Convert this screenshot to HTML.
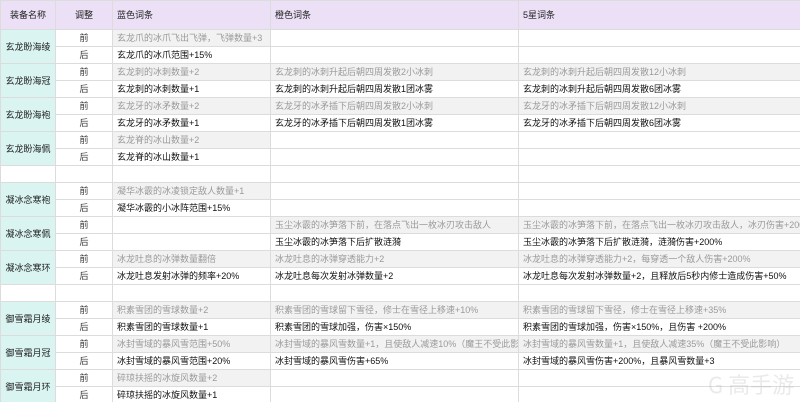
<!DOCTYPE html>
<html><head><meta charset="utf-8"><style>
html,body{margin:0;padding:0;background:#fff;width:800px;height:402px;overflow:hidden}
table{border-collapse:collapse;table-layout:fixed;width:801px;font-family:"Liberation Sans","Noto Sans CJK SC",sans-serif;font-size:9px;color:#111}
td,th{border:1px solid #dcdcdc;height:16px;padding:0 0 0 4px;white-space:nowrap;overflow:hidden;line-height:16px}
th{height:28px;background:#ebe0f6;font-weight:normal;text-align:left;color:#222}
th.c{text-align:center;padding:0}
td.n{background:#d9f4f1;text-align:center;padding:0;color:#222}
td.a{text-align:center;padding:0;color:#333}
tr.p td.t{background:#f2f2f2;color:#9a9a9a}
tr.p td.e{background:#fff}
.wm{position:absolute;left:708px;top:368px;font:22px "Noto Sans CJK SC",sans-serif;color:rgba(170,170,170,.25)}
</style></head><body>
<table>
<colgroup><col style="width:55px"><col style="width:57px"><col style="width:158px"><col style="width:248px"><col style="width:283px"></colgroup>
<tr><th class="c">装备名称</th><th class="c">调整</th><th>蓝色词条</th><th>橙色词条</th><th>5星词条</th></tr>
<tr class="p"><td class="n" rowspan="2">玄龙盼海绫</td><td class="a">前</td><td class="t">玄龙爪的冰爪飞出飞弹，飞弹数量+3</td><td class="e"></td><td class="e"></td></tr>
<tr><td class="a">后</td><td>玄龙爪的冰爪范围+15%</td><td></td><td></td></tr>
<tr class="p"><td class="n" rowspan="2">玄龙盼海冠</td><td class="a">前</td><td class="t">玄龙刺的冰刺数量+2</td><td class="t">玄龙刺的冰刺升起后朝四周发散2小冰刺</td><td class="t">玄龙刺的冰刺升起后朝四周发散12小冰刺</td></tr>
<tr><td class="a">后</td><td>玄龙刺的冰刺数量+1</td><td>玄龙刺的冰刺升起后朝四周发散1团冰雾</td><td>玄龙刺的冰刺升起后朝四周发散6团冰雾</td></tr>
<tr class="p"><td class="n" rowspan="2">玄龙盼海袍</td><td class="a">前</td><td class="t">玄龙牙的冰矛数量+2</td><td class="t">玄龙牙的冰矛插下后朝四周发散2小冰刺</td><td class="t">玄龙牙的冰矛插下后朝四周发散12小冰刺</td></tr>
<tr><td class="a">后</td><td>玄龙牙的冰矛数量+1</td><td>玄龙牙的冰矛插下后朝四周发散1团冰雾</td><td>玄龙牙的冰矛插下后朝四周发散6团冰雾</td></tr>
<tr class="p"><td class="n" rowspan="2">玄龙盼海佩</td><td class="a">前</td><td class="t">玄龙脊的冰山数量+2</td><td class="e"></td><td class="e"></td></tr>
<tr><td class="a">后</td><td>玄龙脊的冰山数量+1</td><td></td><td></td></tr>
<tr><td></td><td></td><td></td><td></td><td></td></tr>
<tr class="p"><td class="n" rowspan="2">凝冰念寒袍</td><td class="a">前</td><td class="t">凝华冰霰的冰凌锁定敌人数量+1</td><td class="e"></td><td class="e"></td></tr>
<tr><td class="a">后</td><td>凝华冰霰的小冰阵范围+15%</td><td></td><td></td></tr>
<tr class="p"><td class="n" rowspan="2">凝冰念寒佩</td><td class="a">前</td><td class="e"></td><td class="t">玉尘冰霰的冰笋落下前，在落点飞出一枚冰刃攻击敌人</td><td class="t">玉尘冰霰的冰笋落下前，在落点飞出一枚冰刃攻击敌人，冰刃伤害+200%</td></tr>
<tr><td class="a">后</td><td></td><td>玉尘冰霰的冰笋落下后扩散涟漪</td><td>玉尘冰霰的冰笋落下后扩散涟漪，涟漪伤害+200%</td></tr>
<tr class="p"><td class="n" rowspan="2">凝冰念寒环</td><td class="a">前</td><td class="t">冰龙吐息的冰弹数量翻倍</td><td class="t">冰龙吐息的冰弹穿透能力+2</td><td class="t">冰龙吐息的冰弹穿透能力+2，每穿透一个敌人伤害+200%</td></tr>
<tr><td class="a">后</td><td>冰龙吐息发射冰弹的频率+20%</td><td>冰龙吐息每次发射冰弹数量+2</td><td>冰龙吐息每次发射冰弹数量+2，且释放后5秒内修士造成伤害+50%</td></tr>
<tr><td></td><td></td><td></td><td></td><td></td></tr>
<tr class="p"><td class="n" rowspan="2">御雪霜月绫</td><td class="a">前</td><td class="t">积素雪团的雪球数量+2</td><td class="t">积素雪团的雪球留下雪径，修士在雪径上移速+10%</td><td class="t">积素雪团的雪球留下雪径，修士在雪径上移速+35%</td></tr>
<tr><td class="a">后</td><td>积素雪团的雪球数量+1</td><td>积素雪团的雪球加强，伤害×150%</td><td>积素雪团的雪球加强，伤害×150%，且伤害 +200%</td></tr>
<tr class="p"><td class="n" rowspan="2">御雪霜月冠</td><td class="a">前</td><td class="t">冰封雪域的暴风雪范围+50%</td><td class="t">冰封雪域的暴风雪数量+1，且使敌人减速10%（魔王不受此影响）</td><td class="t">冰封雪域的暴风雪数量+1，且使敌人减速35%（魔王不受此影响）</td></tr>
<tr><td class="a">后</td><td>冰封雪域的暴风雪范围+20%</td><td>冰封雪域的暴风雪伤害+65%</td><td>冰封雪域的暴风雪伤害+200%，且暴风雪数量+3</td></tr>
<tr class="p"><td class="n" rowspan="2">御雪霜月环</td><td class="a">前</td><td class="t">碎琼扶摇的冰旋风数量+2</td><td class="e"></td><td class="e"></td></tr>
<tr><td class="a">后</td><td>碎琼扶摇的冰旋风数量+1</td><td></td><td></td></tr>
</table>
<div class="wm">G 高手游</div>
</body></html>
